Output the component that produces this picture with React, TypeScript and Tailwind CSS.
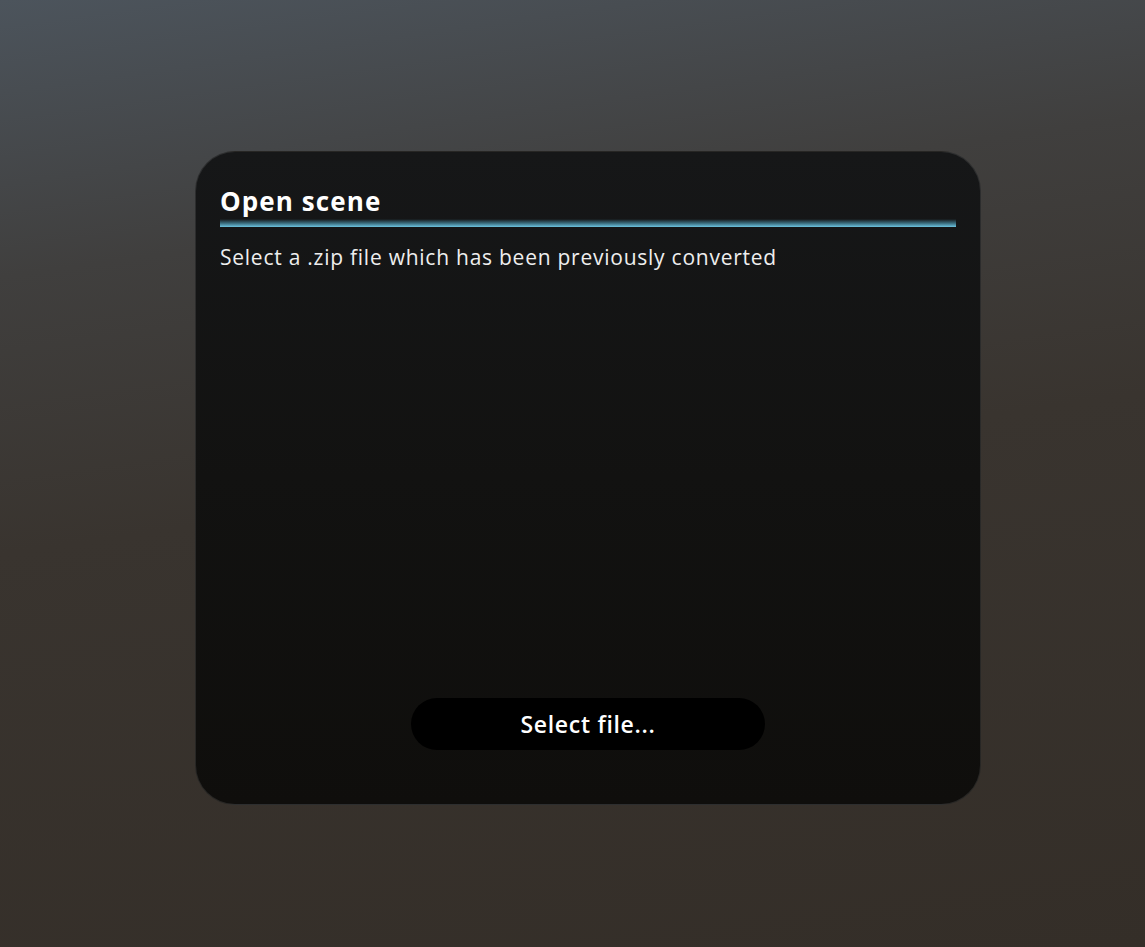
export default function App() {
  return (
    <div
      className="flex h-[947px] w-full flex-col bg-[linear-gradient(172deg,#4c545c_0%,#403f3e_25%,#39342f_50%,#342e28_100%)] pt-[151px]"
      style={{ fontFamily: '"Open Sans", "Liberation Sans", sans-serif' }}
    >
      <div className="ml-[195px] flex h-[654px] w-[786px] flex-col rounded-[40px] border border-white/10 bg-[linear-gradient(180deg,#161718_0%,#121211_50%,#0f0e0c_100%)] px-[24px] pt-[32px] pb-[54px]">
        <h1 className="text-[26px] leading-[35px] font-bold tracking-[1.1px] text-white">Open scene</h1>
        <div className="h-[8px] w-full bg-[linear-gradient(180deg,rgba(90,184,216,0)_0%,rgba(90,184,216,0.5)_50%,#6cc4e0_100%)]" />
        <p className="mt-[16px] text-[21px] leading-[28px] tracking-[0.75px] text-[#eeeeee]">
          Select a .zip file which has been previously converted
        </p>
        <div className="mt-auto flex justify-center">
          <button className="h-[52px] w-[354px] rounded-full bg-black text-[23px] font-semibold tracking-[0.7px] text-white">
            Select file...
          </button>
        </div>
      </div>
    </div>
  );
}
